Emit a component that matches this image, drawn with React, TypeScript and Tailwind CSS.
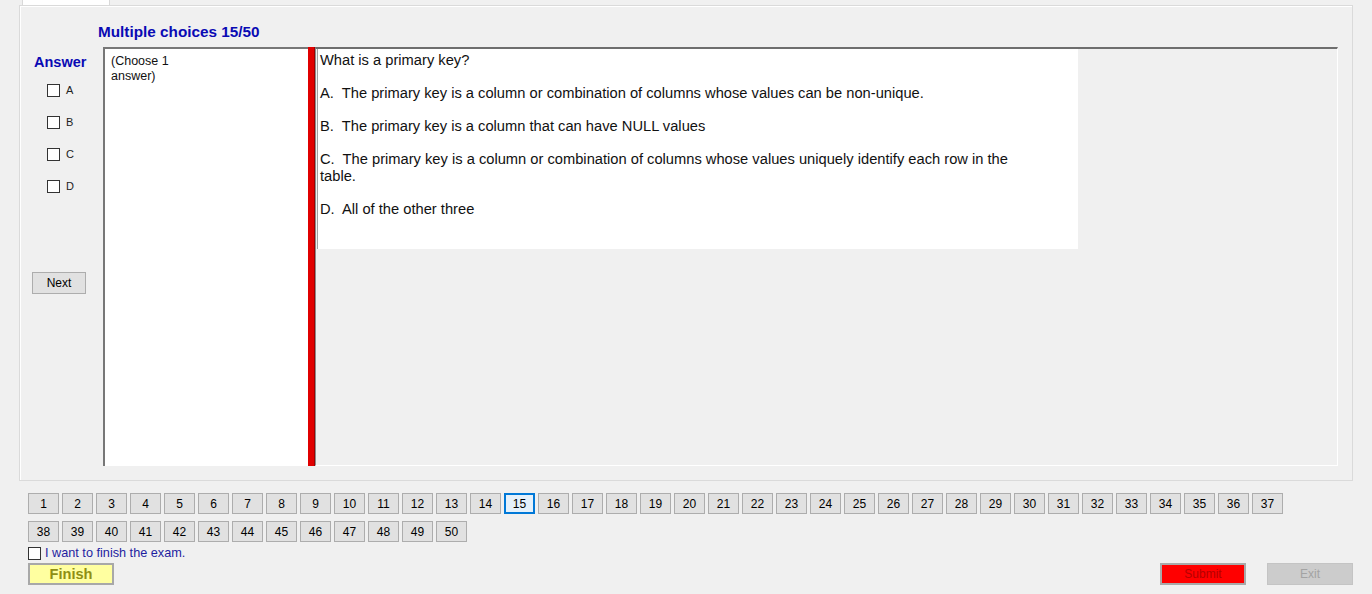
import React from "react";

const questionLines = [
  "What is a primary key?",
  "",
  "A.  The primary key is a column or combination of columns whose values can be non-unique.",
  "",
  "B.  The primary key is a column that can have NULL values",
  "",
  "C.  The primary key is a column or combination of columns whose values uniquely identify each row in the",
  "table.",
  "",
  "D.  All of the other three",
];

const choices = ["A", "B", "C", "D"];
const pages = Array.from({ length: 50 }, (_, i) => i + 1);
const current = 15;

const Box = () => (
  <span className="inline-block w-[13px] h-[13px] bg-white border border-[#333333]" />
);

export default function App() {
  return (
    <div className="w-[1372px] h-[594px] overflow-hidden bg-[#f0f0f0] font-['Liberation_Sans',Arial,sans-serif] text-black">
      {/* tab strip */}
      <div className="h-[5px] flex">
        <div className="ml-[22px] w-[88px] h-full bg-white border-x border-[#d9d9d9]" />
      </div>

      {/* main panel */}
      <div className="ml-[19px] w-[1334px] h-[476px] border border-[#dadada] shadow-[inset_1px_1px_0_#ffffff] flex flex-col">
        <div className="pl-[78px] pt-[17px] text-[15.3px] leading-[17px] font-bold text-[#0a0ab4]">
          Multiple choices 15/50
        </div>

        <div className="mt-[7px] h-[419px] flex">
          {/* answer column */}
          <div className="w-[83px] flex flex-col">
            <div className="pl-[14px] pt-[7px] text-[14.5px] leading-[17px] font-bold text-[#0a0ab4]">Answer</div>
            <div className="mt-[3px] flex flex-col">
              {choices.map((c) => (
                <div key={c} className="h-[32px] pl-[27px] flex items-center gap-[6px]">
                  <Box />
                  <span className="text-[11px] leading-[13px] text-[#222222]">{c}</span>
                </div>
              ))}
            </div>
            <button className="mt-[70px] ml-[12px] w-[54px] h-[22px] bg-[#e1e1e1] border border-[#adadad] text-[12px] leading-[14px] text-black">
              Next
            </button>
          </div>

          {/* choose box */}
          <div className="w-[205px] h-full bg-white border-l-2 border-t-2 border-[#777777] pl-[6px] pt-[5px]">
            <div className="w-[64px] text-[12.5px] leading-[15px] text-[#111111]">(Choose 1 answer)</div>
          </div>

          {/* red bar */}
          <div className="w-[7px] h-full bg-[#e00000] border-r border-[#a00000]" />

          {/* question area */}
          <div className="w-[1023px] h-full border-t-2 border-t-[#6e6e6e] border-l border-l-[#8c8c8c] border-r border-r-white border-b border-b-white">
            <div className="ml-[1px] w-[761px] h-[200px] bg-white border-l border-[#a0a0a0] pl-[2px] pt-[3px]">
              <div className="whitespace-pre text-[14.7px] leading-[16.5px] text-[#111111]">
                {questionLines.join("\n")}
              </div>
            </div>
          </div>
        </div>
      </div>

      {/* question navigation */}
      <div className="mt-[12px] pl-[28px]">
        <div className="w-[1256px] flex flex-wrap gap-x-[3px] gap-y-[7px]">
          {pages.map((n) => (
            <button
              key={n}
              className={
                n === current
                  ? "w-[31px] h-[21px] bg-[#e5f1fb] border-2 border-[#0078d7] text-[12px] leading-[14px] text-black"
                  : "w-[31px] h-[21px] bg-[#e1e1e1] border border-[#adadad] text-[12px] leading-[14px] text-black"
              }
            >
              {n}
            </button>
          ))}
        </div>
      </div>

      <div className="mt-[4px] pl-[28px] h-[15px] flex items-center gap-[4px]">
        <Box />
        <span className="text-[12.7px] leading-[15px] text-[#1e1ea0]">I want to finish the exam.</span>
      </div>

      <div className="mt-[2px] pl-[28px] pr-[19px] flex items-center">
        <button className="w-[86px] h-[22px] bg-[#ffffa0] border-2 border-[#a8a8a8] text-[14.6px] leading-[16px] font-bold text-[#8f8f14]">
          Finish
        </button>
        <div className="flex-1" />
        <button className="w-[86px] h-[22px] bg-[#ff0000] border-2 border-[#a9a9a9] text-[12px] leading-[14px] text-[#b40000]">
          Submit
        </button>
        <button className="ml-[21px] w-[86px] h-[22px] bg-[#cccccc] border border-[#c4c4c4] text-[12px] leading-[14px] text-[#a3a3a3]">
          Exit
        </button>
      </div>
    </div>
  );
}
